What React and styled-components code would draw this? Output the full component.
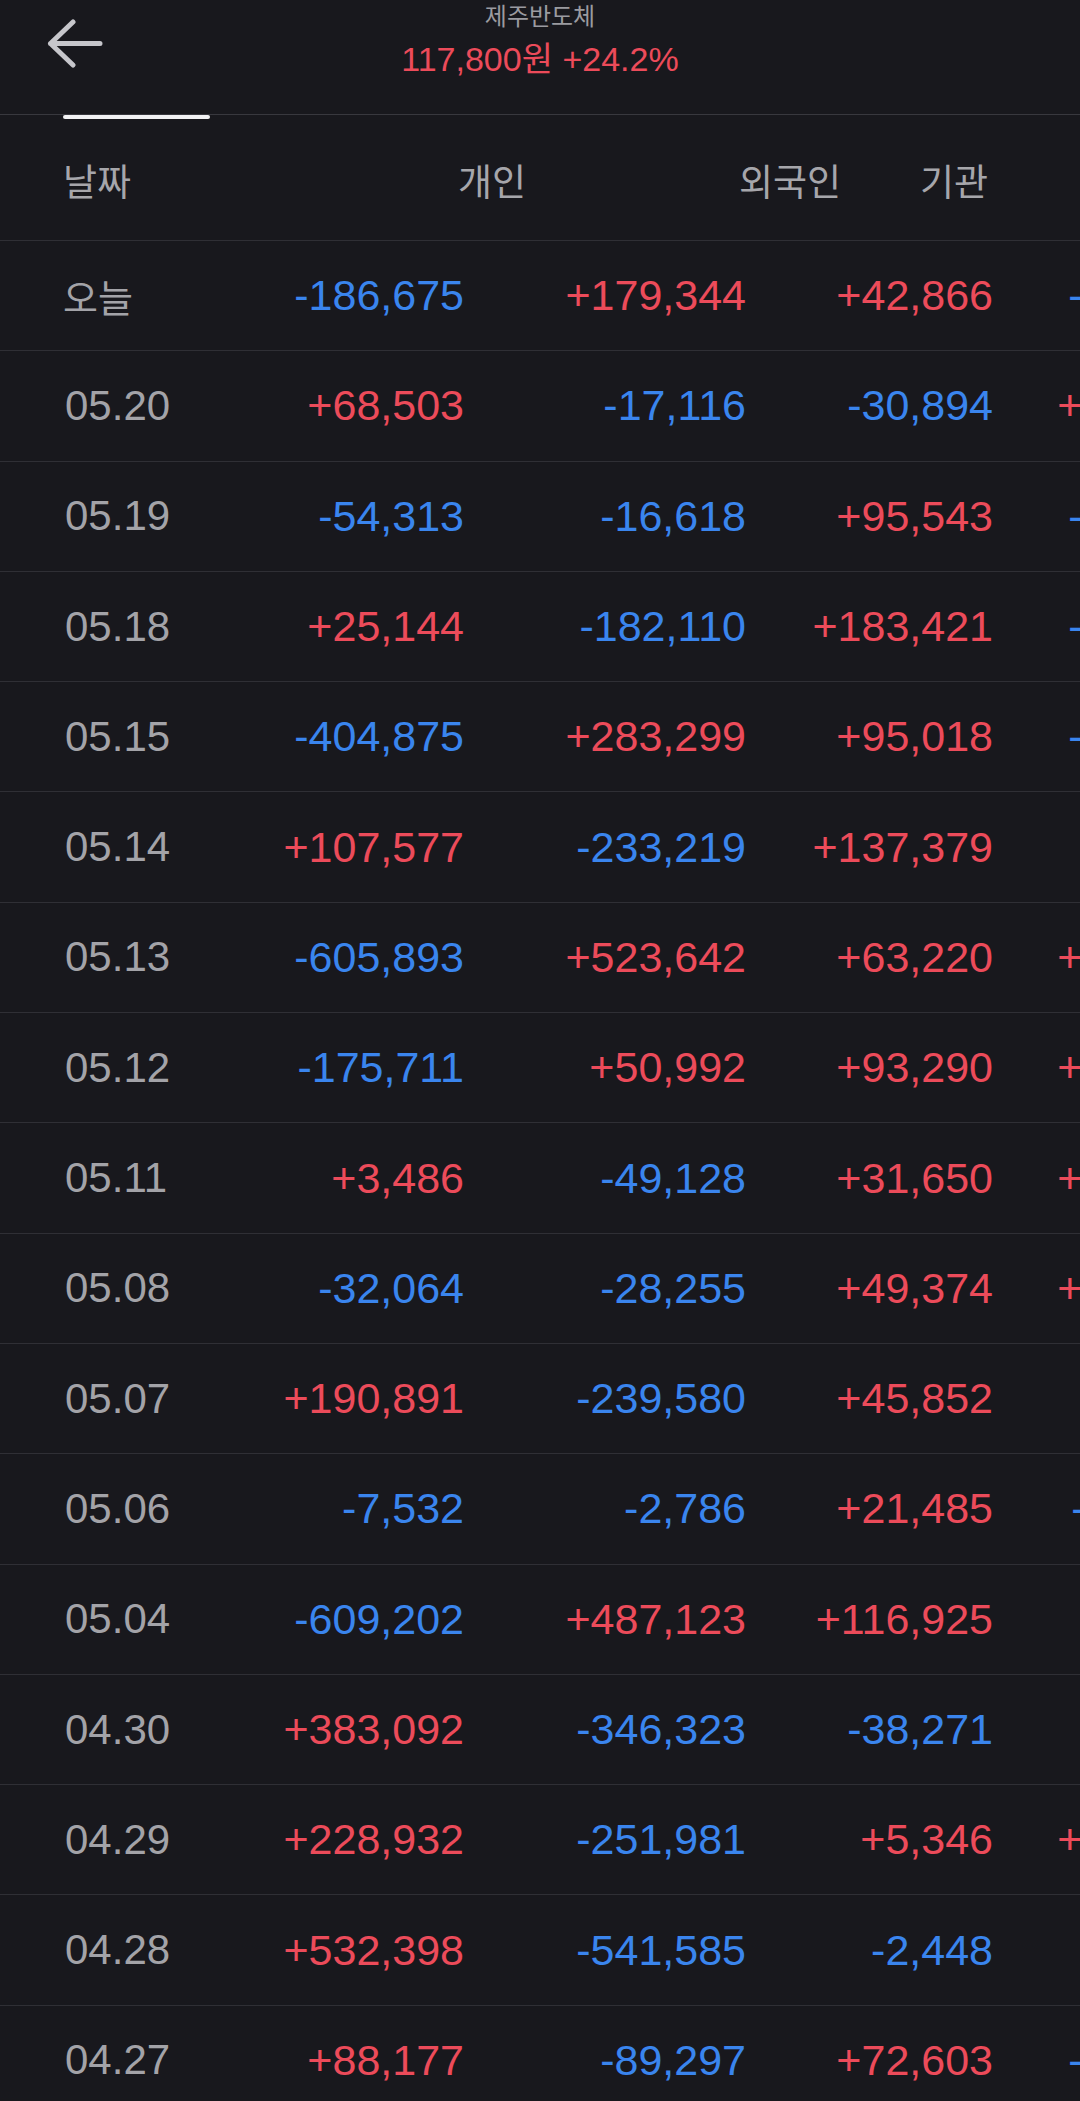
import styled, { createGlobalStyle } from 'styled-components';

const GlobalStyle = createGlobalStyle`
  html, body {
    margin: 0;
    padding: 0;
    background-color: #18181d;
    overflow: hidden;
  }
  body {
    font-family: "Liberation Sans", "Noto Sans CJK KR", sans-serif;
  }
`;

const UP = '#ec4b5a';
const DOWN = '#3a85ee';

const Screen = styled.div`
  width: 1080px;
  height: 2101px;
  overflow: hidden;
  background-color: #18181d;
  color: #a4a4a9;
`;

const TopBar = styled.header`
  display: grid;
  grid-template-columns: 1fr auto 1fr;
  height: 114px;
`;

const BackButton = styled.button`
  justify-self: start;
  align-self: start;
  margin: 19px 0 0 47px;
  padding: 0;
  border: 0;
  background: none;
  width: 56px;
  height: 50px;
  display: flex;
`;

const TitleBlock = styled.div`
  display: flex;
  flex-direction: column;
  align-items: center;
`;

const StockName = styled.div`
  font-size: 24px;
  line-height: 34px;
  color: #9b9ba0;
`;

const StockPrice = styled.div`
  font-size: 34px;
  line-height: 44px;
  padding-top: 3px;
  color: ${UP};
`;

const TabStrip = styled.div`
  display: flex;
  height: 4px;
  border-top: 1px solid #38383e;
`;

const TabIndicator = styled.div`
  width: 147px;
  height: 4px;
  margin-left: 63px;
  border-radius: 2px;
  background-color: #f2f2f4;
`;

const Table = styled.div`
  width: 100%;
  overflow: hidden;
`;

const HeadRow = styled.div`
  display: grid;
  grid-template-columns: 144px 319px 315px 147px;
  align-items: center;
  padding-left: 63px;
  height: 122px;
  box-sizing: border-box;
  border-bottom: 1px solid #2f2f35;
  font-size: 37px;
  color: #a6a6ab;
`;

const HeadCell = styled.div`
  text-align: ${(p) => (p.$left ? 'left' : 'right')};
  font-family: "Noto Sans CJK KR", sans-serif;
`;

const Row = styled.div`
  display: grid;
  grid-template-columns: 140px 259px 282px 247px 221px;
  align-items: center;
  width: 1214px;
  padding-left: 65px;
  height: 110.3px;
  box-sizing: border-box;
  border-bottom: 1px solid #2f2f35;
  font-size: 43px;
  white-space: nowrap;
`;

const DateCell = styled.div`
  color: #a3a3a8;
  font-family: ${(p) => (p.$kr ? '"Noto Sans CJK KR", sans-serif' : 'inherit')};
  font-size: ${(p) => (p.$kr ? '38px' : '42px')};
  margin-left: ${(p) => (p.$kr ? '-2px' : '0')};
`;

const Value = styled.div`
  text-align: right;
  color: ${(p) => (p.$v < 0 ? DOWN : UP)};
`;

const rows = [
  ['오늘', -186675, 179344, 42866, -35535],
  ['05.20', 68503, -17116, -30894, 20493],
  ['05.19', -54313, -16618, 95543, -24612],
  ['05.18', 25144, -182110, 183421, -26455],
  ['05.15', -404875, 283299, 95018, -26442],
  ['05.14', 107577, -233219, 137379, -737],
  ['05.13', -605893, 523642, 63220, 19031],
  ['05.12', -175711, 50992, 93290, 31429],
  ['05.11', 3486, -49128, 31650, 13992],
  ['05.08', -32064, -28255, 49374, 10945],
  ['05.07', 190891, -239580, 45852, 283],
  ['05.06', -7532, -2786, 21485, -11167],
  ['05.04', -609202, 487123, 116925, 515],
  ['04.30', 383092, -346323, -38271, 150],
  ['04.29', 228932, -251981, 5346, 17703],
  ['04.28', 532398, -541585, -2448, 363],
  ['04.27', 88177, -89297, 72603, -71483],
];

const fmt = (n) => (n < 0 ? '-' : '+') + Math.abs(n).toLocaleString('en-US');

const BackArrow = () => (
  <svg width="56" height="50" viewBox="0 0 56 50" fill="none">
    <path
      d="M26 3 L3.5 24.5 L26 46 M3.5 24.5 H53"
      stroke="#c6c6cb"
      strokeWidth="5"
      strokeLinecap="round"
      strokeLinejoin="round"
    />
  </svg>
);

export default function App() {
  return (
    <Screen>
      <GlobalStyle />
      <TopBar>
        <BackButton aria-label="뒤로">
          <BackArrow />
        </BackButton>
        <TitleBlock>
          <StockName>제주반도체</StockName>
          <StockPrice>117,800원 +24.2%</StockPrice>
        </TitleBlock>
        <div />
      </TopBar>
      <TabStrip>
        <TabIndicator />
      </TabStrip>
      <Table>
        <HeadRow>
          <HeadCell $left>날짜</HeadCell>
          <HeadCell>개인</HeadCell>
          <HeadCell>외국인</HeadCell>
          <HeadCell>기관</HeadCell>
        </HeadRow>
        {rows.map(([date, ...vals]) => (
          <Row key={date}>
            <DateCell $kr={date === '오늘'}>{date}</DateCell>
            {vals.map((v, i) => (
              <Value key={i} $v={v}>
                {fmt(v)}
              </Value>
            ))}
          </Row>
        ))}
      </Table>
    </Screen>
  );
}
